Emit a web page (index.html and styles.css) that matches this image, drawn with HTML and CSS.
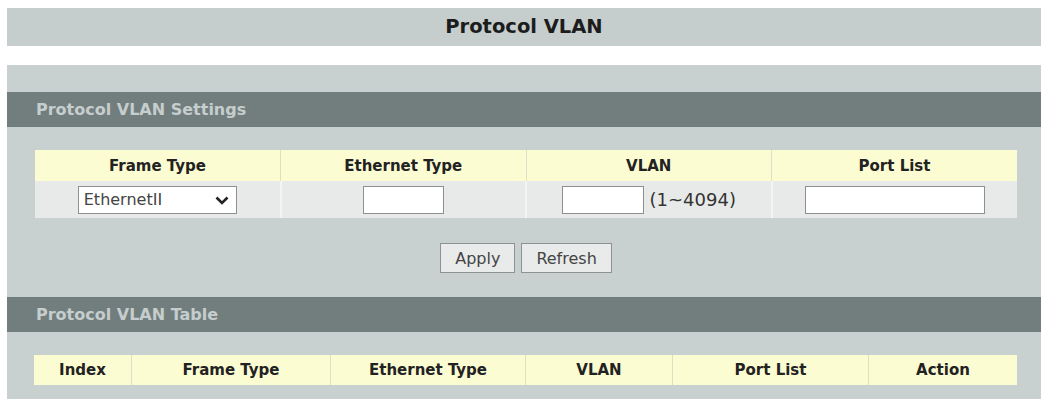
FILE: index.html
```html
<!DOCTYPE html>
<html lang="en">
<head>
  <meta charset="UTF-8">
  <title>Protocol VLAN</title>
  <link rel="stylesheet" href="styles.css">
</head>
<body>

  <div class="page-title">Protocol VLAN</div>

  <div class="panel">
    <div class="section-head">Protocol VLAN Settings</div>

    <table class="grid settings">
      <tr>
        <th>Frame Type</th>
        <th>Ethernet Type</th>
        <th>VLAN</th>
        <th>Port List</th>
      </tr>
      <tr>
        <td>
          <span class="select-wrap">
            <select id="frameType">
              <option>EthernetII</option>
              <option>IEEE802.3 LLC</option>
              <option>IEEE802.3 SNAP</option>
            </select>
            <svg class="chevron" width="14" height="9" viewBox="0 0 14 9">
              <path d="M1.5 1.5 L7 7 L12.5 1.5" fill="none" stroke="#222" stroke-width="2.6"/>
            </svg>
          </span>
        </td>
        <td><input type="text" id="etherType" class="w-ether"></td>
        <td><input type="text" id="vlanId" class="w-vlan"><span class="range">(1~4094)</span></td>
        <td><input type="text" id="portList" class="w-ports"></td>
      </tr>
    </table>

    <div class="actions">
      <button>Apply</button>
      <button>Refresh</button>
    </div>

    <div class="section-head">Protocol VLAN Table</div>

    <table class="grid list">
      <tr>
        <th class="c-index">Index</th>
        <th class="c-frame">Frame Type</th>
        <th class="c-ether">Ethernet Type</th>
        <th class="c-vlan">VLAN</th>
        <th class="c-ports">Port List</th>
        <th class="c-action">Action</th>
      </tr>
    </table>
  </div>

</body>
</html>
```

FILE: styles.css
```css
body {
  margin: 0;
  padding: 8px 5px 0 7px;
  background-color: #ffffff;
  font-family: "DejaVu Sans", Verdana, sans-serif;
  color: #222;
}

.page-title {
  height: 38px;
  line-height: 38px;
  background-color: #c6cecd;
  text-align: center;
  font-size: 19.5px;
  font-weight: bold;
  color: #1c1c1c;
}

.panel {
  margin-top: 19px;
  padding: 27px 0 14px;
  background-color: #c8d0d0;
}

.section-head {
  height: 35px;
  line-height: 35px;
  padding-left: 29px;
  background-color: #717e7d;
  color: #c6cdcd;
  font-size: 16px;
  font-weight: bold;
}

.grid {
  border-collapse: collapse;
  margin: 23px 0 0 28px;
  width: 982px;
  table-layout: fixed;
}

.grid th {
  height: 31px;
  padding: 0;
  background-color: #fcfcd2;
  border-right: 1px solid #dfdfc4;
  font-size: 15px;
  font-weight: bold;
  color: #222;
  text-align: center;
}

.grid th:last-child,
.grid td:last-child {
  border-right: none;
}

.grid td {
  height: 37px;
  padding: 0;
  background-color: #e8eaea;
  border-right: 2px solid #f3f4f4;
  text-align: center;
  vertical-align: middle;
}

.list {
  width: 983px;
  margin-left: 27px;
}

.list th {
  height: 30px;
}

.c-index { width: 97px; }
.c-frame { width: 198px; }
.c-ether { width: 194px; }
.c-vlan { width: 146px; }
.c-ports { width: 195px; }
.c-action { width: 148px; }

input[type="text"] {
  box-sizing: border-box;
  height: 28px;
  border: 1px solid #8e8e8e;
  background-color: #ffffff;
  vertical-align: middle;
  margin: 0;
}

.w-ether { width: 81px; }
.w-vlan { width: 82px; }
.w-ports { width: 180px; }

.range {
  display: inline-block;
  margin-left: 6px;
  font-size: 18px;
  color: #333;
  vertical-align: middle;
}

.select-wrap {
  position: relative;
  display: inline-block;
  vertical-align: middle;
}

select {
  appearance: none;
  box-sizing: border-box;
  width: 159px;
  height: 28px;
  padding: 0 0 0 5px;
  border: 1px solid #8e8e8e;
  border-radius: 0;
  background-color: #ffffff;
  font-family: "DejaVu Sans", Verdana, sans-serif;
  font-size: 16px;
  color: #444;
}

.chevron {
  position: absolute;
  right: 8px;
  top: 10px;
  pointer-events: none;
}

.actions {
  display: flex;
  justify-content: center;
  gap: 6px;
  margin: 25px 0 24px 28px;
  width: 982px;
}

button {
  height: 30px;
  padding: 0 14px;
  background-color: #e9eaea;
  border: 1px solid #8f9292;
  border-radius: 0;
  font-family: "DejaVu Sans", Verdana, sans-serif;
  font-size: 16px;
  color: #444;
  cursor: pointer;
}
```
